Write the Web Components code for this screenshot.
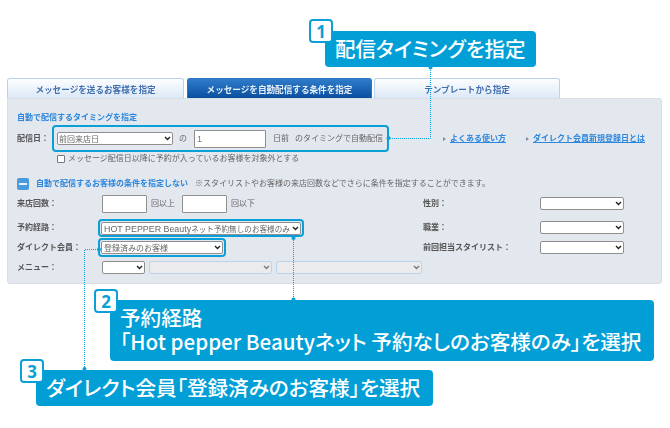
<!DOCTYPE html>
<html lang="ja">
<head>
<meta charset="utf-8">
<title>メッセージ配信条件</title>
<style>
  html, body { margin: 0; background: #fff; }
  body { font-family: "Noto Sans CJK JP", "Noto Sans", sans-serif; color: #555; }
</style>
</head>
<body>
<guide-page></guide-page>

<script>
const FONT = '"Noto Sans CJK JP", "Noto Sans", sans-serif';
const FORM_FONT = '"Liberation Sans", "Noto Sans CJK JP", sans-serif';

class GuideTab extends HTMLElement {
  constructor(){
    super();
    this.attachShadow({ mode: 'open' });
    this.shadowRoot.innerHTML = `
      <style>
        :host {
          display: flex; align-items: center; justify-content: center;
          box-sizing: border-box; height: 20px;
          border: 1px solid #bcd2ec; border-bottom: 0; border-radius: 3px 3px 0 0;
          background: linear-gradient(#fdfeff, #dce8f6);
          font: bold 8.6px ${FONT}; color: #3f6fae;
          filter: blur(.3px);
        }
        :host([active]) {
          border-color: #2a76c4;
          background: linear-gradient(#2f7ccb, #0a4f9f);
          color: #e8f0f8;
        }
      </style>
      <slot></slot>`;
  }
}
customElements.define('guide-tab', GuideTab);

class FormSelect extends HTMLElement {
  constructor(){
    super();
    this.attachShadow({ mode: 'open' });
    this.shadowRoot.innerHTML = `
      <style>
        :host {
          display: flex; align-items: center; box-sizing: border-box;
          height: 13px; padding: 0 1px 0 2px;
          border: 1px solid #8f8f8f; border-radius: 2px; background: #fff;
          font: 8px ${FORM_FONT}; color: #666; white-space: nowrap; overflow: hidden;
        }
        :host([disabled]) { border-color: #bcd3ea; background: #ebebee; }
        .text { flex: 1; min-width: 0; overflow: hidden; }
        svg { flex: none; width: 7px; height: 5px; }
        :host([disabled]) path { stroke: #777; }
      </style>
      <span class="text"><slot></slot></span>
      <svg viewBox="0 0 7 5"><path d="M1 1l2.5 2.5L6 1" fill="none" stroke="#222" stroke-width="1.4"/></svg>`;
  }
}
customElements.define('form-select', FormSelect);

class FormInput extends HTMLElement {
  constructor(){
    super();
    this.attachShadow({ mode: 'open' });
    this.shadowRoot.innerHTML = `
      <style>
        :host {
          display: flex; align-items: center; box-sizing: border-box;
          height: 18px; padding-left: 2px;
          border: 1px solid #8f8f8f; border-radius: 1px; background: #fff;
          font: 9px ${FORM_FONT}; color: #777;
        }
      </style>
      <slot></slot>`;
  }
}
customElements.define('form-input', FormInput);

class MarkBox extends HTMLElement {
  constructor(){
    super();
    this.attachShadow({ mode: 'open' });
    this.shadowRoot.innerHTML = `
      <style>
        :host {
          display: flex; align-items: center; box-sizing: border-box;
          border: 2px solid #0a9fd6; border-radius: 4px;
        }
      </style>
      <slot></slot>`;
  }
}
customElements.define('mark-box', MarkBox);

class GuideCallout extends HTMLElement {
  constructor(){
    super();
    this.attachShadow({ mode: 'open' });
    this.shadowRoot.innerHTML = `
      <style>
        :host {
          display: block; position: relative; box-sizing: border-box;
          background: #029fd7; border-radius: 4px; color: #fff;
          font: 500 20.6px/24px ${FONT}; font-feature-settings: "palt";
          white-space: nowrap;
        }
        .num {
          position: absolute; left: -16px; top: var(--num-top, -11px); box-sizing: border-box;
          width: 24px; height: 24px; display: flex; align-items: center; justify-content: center;
          background: #fff; border: 2px solid #0a9fd6; border-radius: 4px;
          color: #0a9fd6; font: bold 17px "Noto Sans", sans-serif;
        }
      </style>
      <span class="num"></span>
      <slot></slot>`;
  }
  connectedCallback(){
    this.shadowRoot.querySelector('.num').textContent = this.getAttribute('num');
  }
}
customElements.define('guide-callout', GuideCallout);

class GuidePanel extends HTMLElement {
  constructor(){
    super();
    this.attachShadow({ mode: 'open' });
    this.shadowRoot.innerHTML = `
      <style>
        :host {
          display: block; box-sizing: border-box; width: 655px; height: 186px;
          padding: 13px 0 0 9px;
          background: #e3e7ee; border: 1px solid #d9dde4; border-radius: 0 3px 3px 3px;
          font: 8px/12px ${FORM_FONT}; color: #666; white-space: nowrap;
        }
        .blur { filter: blur(.3px); }
        b { color: #555; }
        a { color: #2b86dc; font-weight: bold; text-decoration: underline; }
        .head { color: #2b86dc; font-weight: bold; height: 12px; }
        .delivery { display: flex; align-items: center; margin-top: 1px; height: 27px; }
        .delivery b { width: 35px; flex: none; }
        .delivery mark-box { width: 337px; height: 27px; padding-left: 3px; }
        .delivery form-select { width: 116px; padding-left: 1px; }
        .no { margin: 0 7px 0 6px; }
        .delivery form-input { width: 72px; margin-right: 7px; }
        .gap { margin-right: 6px; }
        .links { display: flex; margin-left: 54px; gap: 20px; }
        .links span { display: flex; align-items: center; gap: 4px; }
        .arrow { width: 0; height: 0; border-left: 3px solid #7d8fa6; border-top: 2.5px solid transparent; border-bottom: 2.5px solid transparent; }
        .check { display: flex; align-items: center; gap: 3px; margin: 2px 0 0 40px; height: 10px; }
        .check i { width: 6px; height: 6px; border: 1px solid #777; border-radius: 1px; background: #fff; }
        .cond { display: flex; align-items: center; margin-top: 13px; height: 13px; }
        .minus { width: 12px; height: 12px; border-radius: 2px; background: #4a9ade; display: flex; align-items: center; justify-content: center; margin-right: 7px; }
        .minus::after { content: ""; width: 8px; height: 2px; background: #e6f1fb; }
        .cond strong { color: #2b86dc; margin-right: 7px; }
        .grid {
          display: grid; grid-template-columns: 81px 325px 117px 84px;
          grid-template-rows: 24px 20px 20px 20px; align-items: start; margin-top: 5px;
        }
        .grid b { line-height: 17px; }
        .grid > form-select { margin-top: 2px; }
        .counts { display: flex; padding-left: 4px; }
        .counts form-input { width: 45px; margin-right: 4px; }
        .counts span { width: 31px; line-height: 17px; }
        .row-menu { display: flex; gap: 4px; padding: 2px 0 0 4px; }
        .m1 { width: 43px; } .m2 { width: 123px; } .m3 { width: 146px; }
        .route { width: 206px; padding: 0 1px; height: 18px; }
        .route form-select { width: 200px; font-size: 7.6px; }
        .route .latin { font-size: 8.9px; }
        .direct { width: 128px; padding: 0 1px; height: 19px; margin-top: -1px; }
        .direct form-select { width: 122px; }
      </style>
      <div class="blur">
      <div class="head">自動で配信するタイミングを指定</div>
      <div class="delivery">
        <b>配信日：</b>
        <mark-box>
          <form-select>前回来店日</form-select>
          <span class="no">の</span>
          <form-input>1</form-input>
          <span class="gap">日前</span>
          <span>のタイミングで自動配信</span>
        </mark-box>
        <div class="links">
          <span><i class="arrow"></i><a>よくある使い方</a></span>
          <span><i class="arrow"></i><a>ダイレクト会員新規登録日とは</a></span>
        </div>
      </div>
      <div class="check"><i></i><span>メッセージ配信日以降に予約が入っているお客様を対象外とする</span></div>
      <div class="cond">
        <i class="minus"></i>
        <strong>自動で配信するお客様の条件を指定しない</strong>
        <span>※スタイリストやお客様の来店回数などでさらに条件を指定することができます。</span>
      </div>
      <div class="grid">
        <b>来店回数：</b>
        <div class="counts">
          <form-input></form-input><span>回以上</span>
          <form-input></form-input><span>回以下</span>
        </div>
        <b>性別：</b>
        <form-select></form-select>

        <b>予約経路：</b>
        <div><mark-box class="route"><form-select><span class="latin">HOT PEPPER Beauty</span>ネット予約無しのお客様のみ</form-select></mark-box></div>
        <b>職業：</b>
        <form-select></form-select>

        <b>ダイレクト会員：</b>
        <div><mark-box class="direct"><form-select>登録済みのお客様</form-select></mark-box></div>
        <b>前回担当スタイリスト：</b>
        <form-select></form-select>

        <b>メニュー：</b>
        <div class="row-menu">
          <form-select class="m1"></form-select>
          <form-select class="m2" disabled></form-select>
          <form-select class="m3" disabled></form-select>
        </div>
      </div>
      </div>`;
  }
}
customElements.define('guide-panel', GuidePanel);

class GuidePage extends HTMLElement {
  constructor(){
    super();
    this.attachShadow({ mode: 'open' });
    this.shadowRoot.innerHTML = `
      <style>
        :host { display: block; position: relative; width: 670px; height: 428px; overflow: hidden; padding-top: 31px; box-sizing: border-box; }
        .c1 { --num-top: -12px; margin-left: 325px; width: 211px; height: 36px; padding: 5px 0 0 10px; font-size: 20.5px; }
        .tabs { display: flex; gap: 3px; margin: 11px 0 0 7px; }
        .tabs guide-tab { width: 177px; }
        .tabs guide-tab:nth-child(2) { width: 185px; }
        .tabs guide-tab:nth-child(3) { width: 186px; margin-left: -1px; }
        guide-panel { margin-left: 7px; }
        .c2 { margin: 16px 0 0 110px; width: 544px; height: 61px; padding: 5px 0 0 10px; }
        .c3 { margin: 9px 0 0 36px; width: 397px; height: 36px; padding: 5px 0 0 10px; }
        svg { position: absolute; left: 0; top: 0; pointer-events: none; }
      </style>
      <guide-callout class="c1" num="1">配信タイミングを指定</guide-callout>
      <div class="tabs">
        <guide-tab>メッセージを送るお客様を指定</guide-tab>
        <guide-tab active>メッセージを自動配信する条件を指定</guide-tab>
        <guide-tab>テンプレートから指定</guide-tab>
      </div>
      <guide-panel></guide-panel>
      <guide-callout class="c2" num="2">予約経路<br>「Hot pepper Beautyネット 予約なしのお客様のみ」を選択</guide-callout>
      <guide-callout class="c3" num="3">ダイレクト会員「登録済みのお客様」を選択</guide-callout>
      <svg width="670" height="428" fill="none" stroke="#0a9fd6" stroke-width="1" stroke-dasharray="1 1">
        <path d="M390 138.5H430.5V67"/>
        <path d="M293.5 238V300"/>
        <path d="M98 249.5H84.5V369"/>
        <g fill="#0a9fd6" stroke="none">
          <circle cx="388.5" cy="138" r="2"/>
          <circle cx="430.5" cy="67.5" r="2"/>
          <circle cx="293.5" cy="238" r="2"/>
          <circle cx="293.5" cy="299.5" r="2"/>
          <circle cx="99" cy="249.5" r="2"/>
          <circle cx="84.5" cy="369" r="2"/>
        </g>
      </svg>`;
  }
}
customElements.define('guide-page', GuidePage);
</script>
</body>
</html>
